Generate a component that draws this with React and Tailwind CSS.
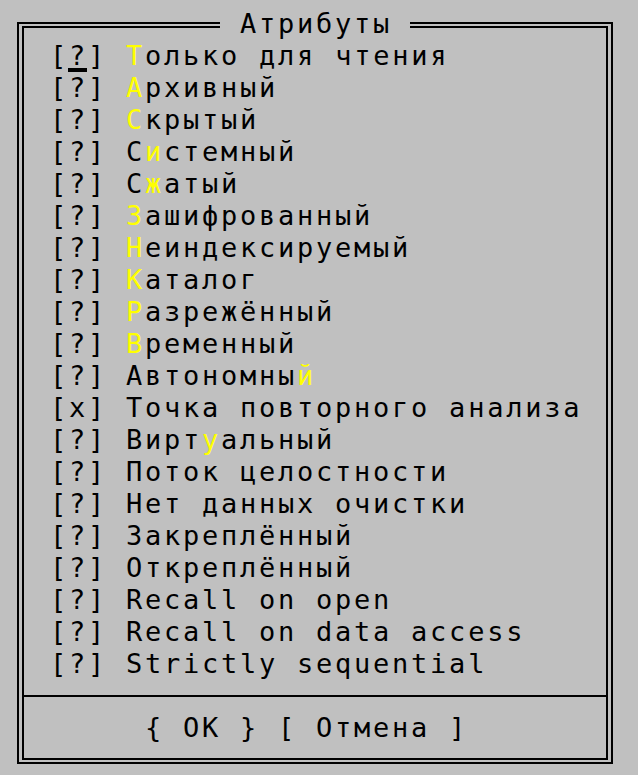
import React from 'react';

const items = [
  ['?', '&Только для чтения'],
  ['?', '&Архивный'],
  ['?', '&Скрытый'],
  ['?', 'С&истемный'],
  ['?', 'С&жатый'],
  ['?', '&Зашифрованный'],
  ['?', '&Неиндексируемый'],
  ['?', '&Каталог'],
  ['?', '&Разрежённый'],
  ['?', '&Временный'],
  ['?', 'Автономны&й'],
  ['x', 'Точка повторного анализа'],
  ['?', 'Вирт&уальный'],
  ['?', 'Поток целостности'],
  ['?', 'Нет данных очистки'],
  ['?', 'Закреплённый'],
  ['?', 'Откреплённый'],
  ['?', 'Recall on open'],
  ['?', 'Recall on data access'],
  ['?', 'Strictly sequential'],
];

// "&" marks the hotkey letter, as in Far's dialog labels
const Label = ({ text }) => {
  const i = text.indexOf('&');
  if (i < 0) return <span>{text}</span>;
  return (
    <span>
      {text.slice(0, i)}
      <span className='text-[#ffff00]'>{text[i + 1]}</span>
      {text.slice(i + 2)}
    </span>
  );
};

const App = () => {
  return (
    <div className="w-[638px] h-[775px] overflow-hidden bg-[#c0c0c0] text-black font-['DejaVu_Sans_Mono',monospace] text-[27px] leading-[32px] tracking-[2.75px] pt-[22px] pl-[17px]">
      {/* Outer frame */}
      <div className='relative w-[596px] h-[742px] border-2 border-black px-[3px] py-[2px]'>
        {/* Title over the frame */}
        <div className='absolute left-[201px] top-[-16px] z-10 h-[32px] w-[190px] bg-[#c0c0c0] pl-[20px] whitespace-pre'>
          Атрибуты
        </div>

        {/* Inner frame */}
        <div className='h-full border-2 border-black flex flex-col'>
          <div className='pt-[12px] pl-[26px]'>
            {items.map(([state, label], idx) => (
              <div key={idx} className='h-[32px] whitespace-pre'>
                {idx === 0 ? (
                  <>
                    [
                    <span className='relative inline-block h-[32px]'>
                      ?
                      <span className='absolute left-[-1px] bottom-0 w-[19px] h-[4px] bg-black' />
                    </span>
                    ]{' '}
                  </>
                ) : (
                  <>{'[' + state + '] '}</>
                )}
                <Label text={label} />
              </div>
            ))}
          </div>

          {/* Buttons */}
          <div className='mt-[15px] border-t-2 border-black pt-[15px] pl-[121px] h-[63px] whitespace-pre'>
            {'{ OK } [ Отмена ]'}
          </div>
        </div>
      </div>
    </div>
  );
};

export default App;
